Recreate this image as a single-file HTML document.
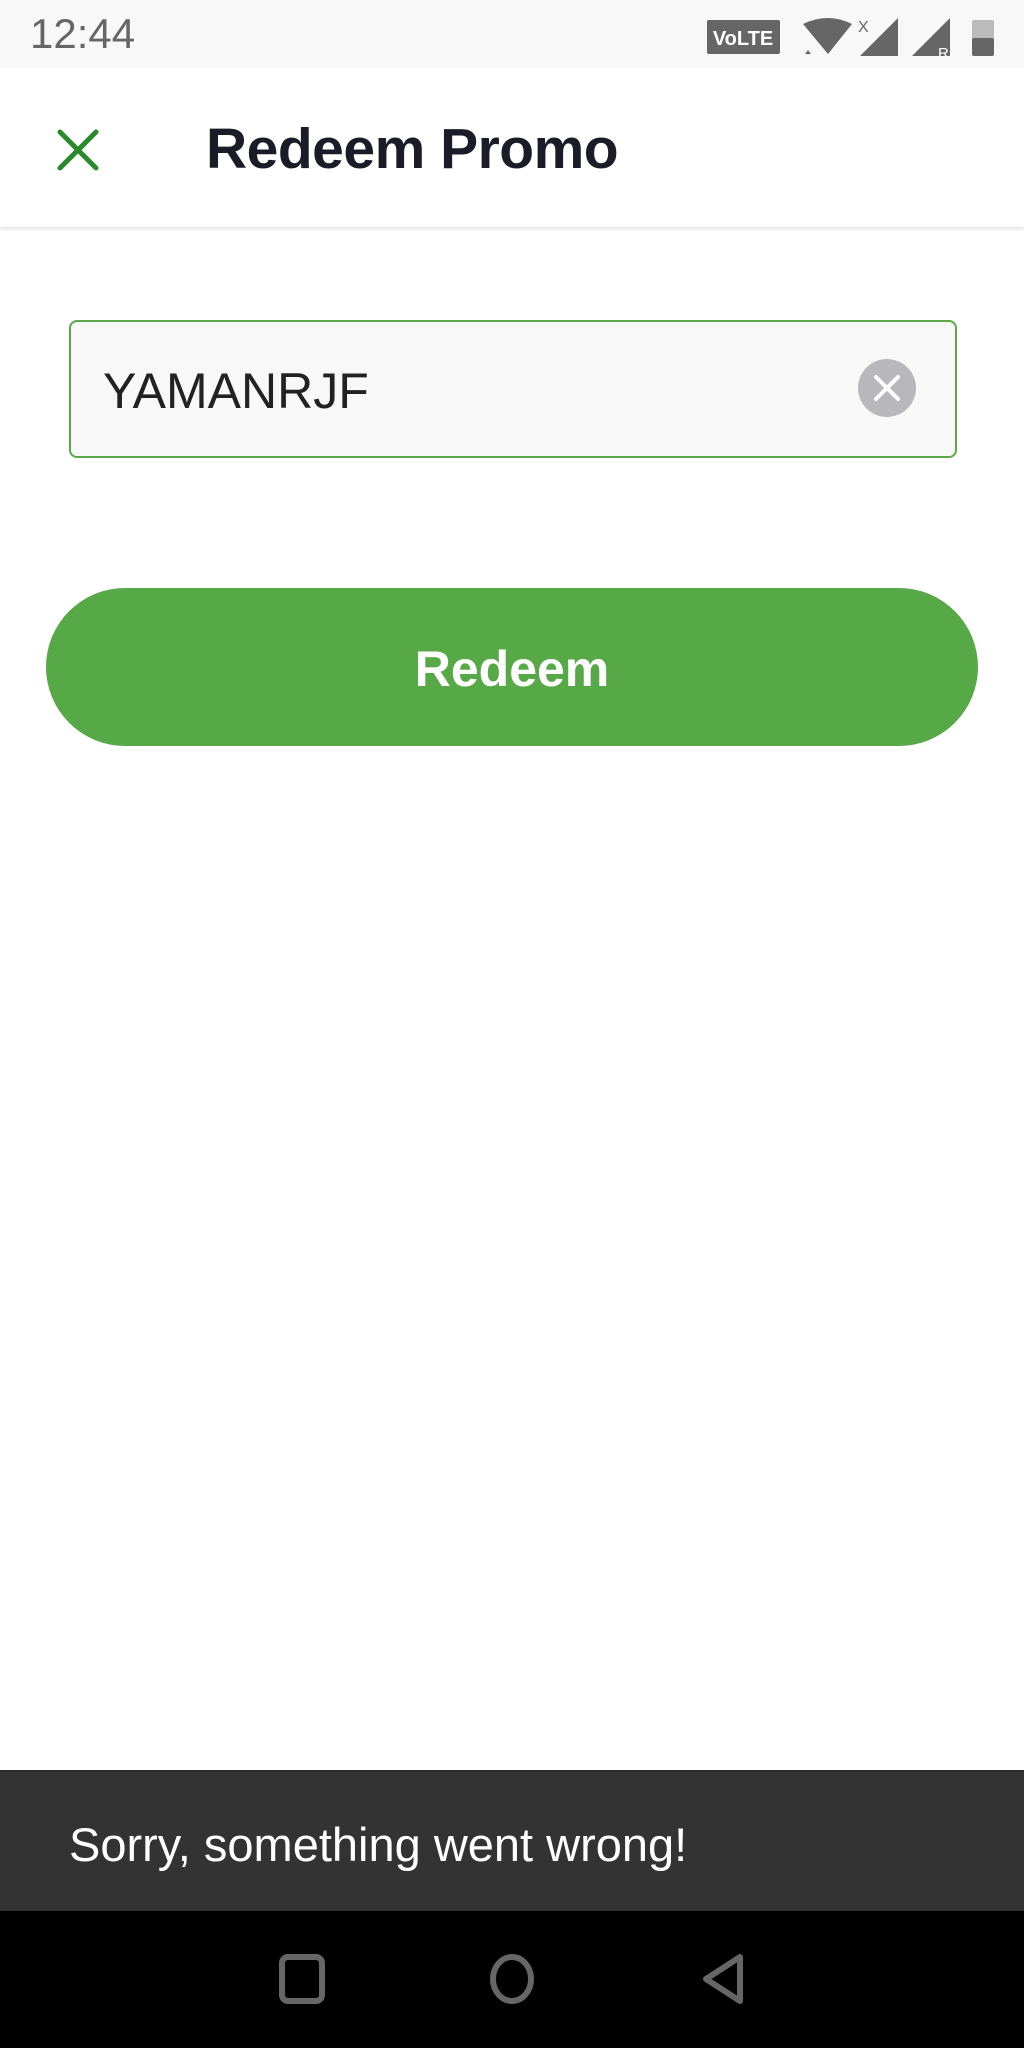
<!DOCTYPE html>
<html><head><style>
body{margin:0;width:1024px;height:2048px;position:relative;background:#fff;font-family:"Liberation Sans",sans-serif;overflow:hidden}
.abs{position:absolute}
</style></head><body>
<div class="abs" style="left:0;top:0;width:1024px;height:68px;background:#f8f8f8"></div>
<div class="abs" style="left:30px;top:10px;font-size:42px;color:#666;">12:44</div>
<svg class="abs" style="left:700px;top:14px" width="300" height="44" viewBox="0 0 300 44">
<rect x="7" y="6" width="73" height="34" rx="2" fill="#666"/>
<text x="43" y="31" font-size="20" font-weight="bold" fill="#fff" text-anchor="middle" font-family="Liberation Sans">VoLTE</text>
<path d="M103 10 Q128 -2 152 10 L128 40 Z" fill="#666"/>
<path d="M105 40 l3 -4 l3 4z M105 44 l3 4 l3 -4z" fill="#666"/>
<text x="158" y="18" font-size="16" fill="#666">X</text>
<path d="M160 42 L198 4 L198 42 Z" fill="#666"/>
<path d="M212 42 L250 4 L250 42 Z" fill="#666"/>
<text x="238" y="44" font-size="15" fill="#fff">R</text>
<rect x="272" y="6" width="22" height="36" rx="2" fill="#bbb"/>
<rect x="272" y="24" width="22" height="18" rx="2" fill="#666"/>
</svg>
<div class="abs" style="left:0;top:68px;width:1024px;height:159px;background:#fff;box-shadow:0 2px 4px rgba(0,0,0,0.12)"></div>
<svg class="abs" style="left:56px;top:128px" width="44" height="44" viewBox="0 0 44 44"><path d="M4 4 L40 40 M40 4 L4 40" stroke="#2a8a2a" stroke-width="5" stroke-linecap="round"/></svg>
<div class="abs" style="left:206px;top:116px;font-size:57px;font-weight:bold;color:#1c1c28;letter-spacing:-0.5px">Redeem Promo</div>
<div class="abs" style="left:69px;top:320px;width:884px;height:134px;border:2px solid #5aa84a;border-radius:8px;background:#f8f8f8"></div>
<div class="abs" style="left:103px;top:362px;font-size:50px;color:#222">YAMANRJF</div>
<svg class="abs" style="left:858px;top:359px" width="58" height="58" viewBox="0 0 58 58"><circle cx="29" cy="29" r="29" fill="#b8b8bc"/><path d="M18 18 L40 40 M40 18 L18 40" stroke="#fff" stroke-width="4" stroke-linecap="round"/></svg>
<div class="abs" style="left:46px;top:588px;width:932px;height:158px;border-radius:79px;background:#57a847;color:#fff;font-size:50px;font-weight:bold;text-align:center;line-height:162px">Redeem</div>
<div class="abs" style="left:0;top:1770px;width:1024px;height:141px;background:#333;border-top:2px solid #2a2a2a"></div>
<div class="abs" style="left:69px;top:1817px;font-size:47px;color:#fff">Sorry, something went wrong!</div>
<div class="abs" style="left:0;top:1911px;width:1024px;height:137px;background:#000"></div>
<svg class="abs" style="left:0;top:1911px" width="1024" height="137"><rect x="282" y="46" width="40" height="44" rx="6" fill="none" stroke="#666" stroke-width="6"/><ellipse cx="512" cy="68" rx="19" ry="22" fill="none" stroke="#666" stroke-width="6"/><path d="M740 46 L740 90 L706 68 Z" fill="none" stroke="#666" stroke-width="6" stroke-linejoin="round"/></svg>
</body></html>
